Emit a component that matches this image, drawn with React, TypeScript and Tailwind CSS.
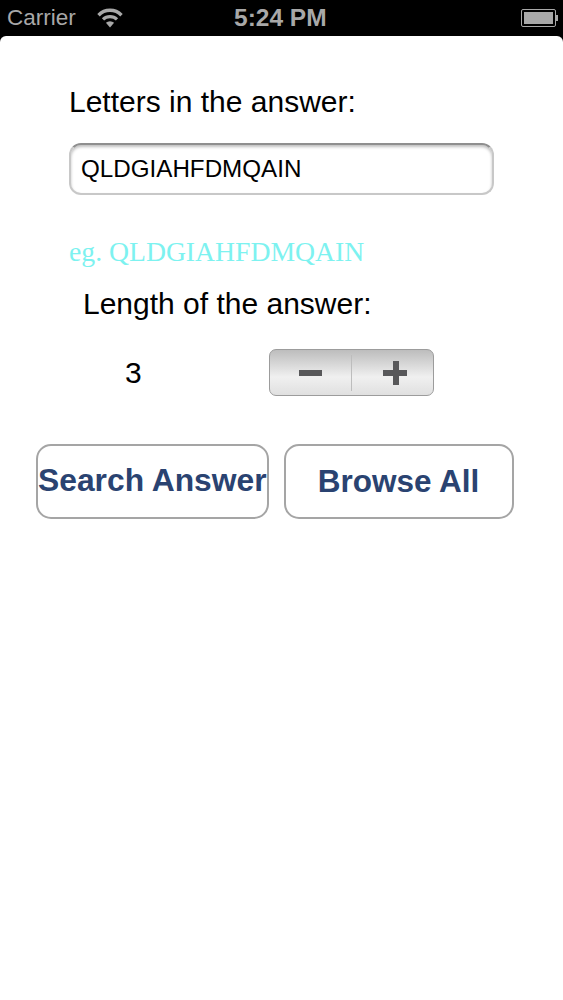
import React from "react";

const sans = "font-['Liberation_Sans',Arial,sans-serif]";

function StatusBar() {
    return (
        <div className={`relative flex h-[36px] items-center justify-between bg-black pl-[7px] pr-[5px] text-[#a8a8a8] ${sans}`}>
            <div className="flex items-center gap-[21px]">
                <span className="text-[22.5px] leading-none">Carrier</span>
                <svg width="26" height="21" viewBox="0 0 26 21" className="mb-[2px]">
                    <path d="M1.5 8.2 A16 16 0 0 1 24.5 8.2" fill="none" stroke="#a8a8a8" strokeWidth="3.4" />
                    <path d="M6 12.4 A10 10 0 0 1 20 12.4" fill="none" stroke="#a8a8a8" strokeWidth="3.2" />
                    <path d="M13 20.5 L8.9 15.8 A6 6 0 0 1 17.1 15.8 Z" fill="#a8a8a8" />
                </svg>
            </div>
            <span className="absolute left-[234px] top-[6px] text-[24.5px] font-bold leading-[24px]">5:24 PM</span>
            <div className="flex items-center">
                <div className="h-[18px] w-[35px] rounded-[2px] border border-[#a8a8a8] p-[2px]">
                    <div className="h-full w-full bg-[#a8a8a8]" />
                </div>
                <div className="h-[6px] w-[2px] bg-[#a8a8a8]" />
            </div>
        </div>
    );
}

function Stepper() {
    return (
        <div className="flex h-[47px] w-[165px] items-center rounded-[7px] border border-[#9c9c9c] bg-gradient-to-b from-[#bdbdbd] via-[#f0f0f0] via-60% to-[#e0e0e0]">
            <div className="flex h-[36px] w-[82px] items-center justify-center border-r border-[#bdbdbd]">
                <div className="h-[6px] w-[23px] bg-[#58585a]" />
            </div>
            <div className="relative flex h-[36px] flex-1 items-center justify-center pl-[4px]">
                <div className="h-[6px] w-[24px] bg-[#58585a]" />
                <div className="absolute left-[41px] h-[24px] w-[6px] bg-[#58585a]" />
            </div>
        </div>
    );
}

export default function App() {
    return (
        <div className={`h-[1000px] w-[563px] overflow-hidden bg-black ${sans}`}>
            <StatusBar />
            <div className="h-[964px] rounded-t-[6px] bg-white text-black">
                <div className="pl-[69px] pt-[48px] text-[30px] leading-[36px]">Letters in the answer:</div>
                <div className="ml-[69px] mt-[23px] flex h-[52px] w-[425px] items-center rounded-[12px] border-2 border-[#c8c8c8] border-t-[#8f8f8f] pl-[10px] text-[24.2px] shadow-[inset_0_2px_3px_rgba(0,0,0,0.25)]">
                    QLDGIAHFDMQAIN
                </div>
                <div className="ml-[69px] mt-[39px] font-['Liberation_Serif',serif] text-[27.7px] leading-[36px] text-[#7df2f0]">eg. QLDGIAHFDMQAIN</div>
                <div className="ml-[83px] mt-[16px] text-[30px] leading-[36px]">Length of the answer:</div>
                <div className="mt-[27px] flex items-center">
                    <span className="ml-[125px] w-[144px] text-[30px] leading-[47px]">3</span>
                    <Stepper />
                </div>
                <div className="ml-[36px] mt-[48px] flex gap-[15px] font-bold text-[#2a4371]">
                    <button className="h-[75px] w-[233px] whitespace-nowrap rounded-[15px] border-2 border-[#a5a5a5] pb-[2px] pr-[3px] text-[31.8px]">Search Answer</button>
                    <button className="h-[75px] w-[230px] rounded-[15px] border-2 border-[#a5a5a5] pr-[1px] text-[31.5px]">Browse All</button>
                </div>
            </div>
        </div>
    );
}
